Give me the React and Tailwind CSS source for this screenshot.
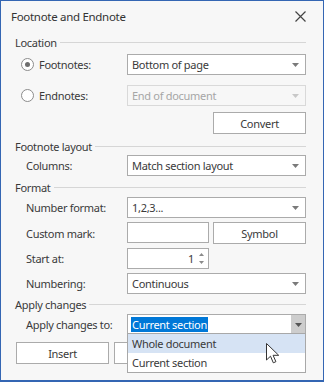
import React from "react";

function Arrow({ disabled, dark }) {
  return (
    <svg width="7" height="4" viewBox="0 0 7 4" className="shrink-0">
      <path d="M0 0h7L3.5 4z" fill={disabled ? "#c8c8c8" : dark ? "#555" : "#7a7a7a"} />
    </svg>
  );
}

function Combo({ value, disabled }) {
  return (
    <div
      className={
        "w-[179px] h-[21px] flex items-center justify-between pl-[4px] pr-[6px] border " +
        (disabled ? "border-[#d9d9d9] bg-[#f7f7f7] text-[#a6a6a6]" : "border-[#ababab] bg-white")
      }
    >
      <span className="whitespace-nowrap">{value}</span>
      <Arrow disabled={disabled} />
    </div>
  );
}

function Button({ children, className = "" }) {
  return (
    <div
      className={
        "h-[22px] flex items-center justify-center border border-[#ababab] bg-white " + className
      }
    >
      {children}
    </div>
  );
}

function Header({ children }) {
  return (
    <div className="h-[16px] flex items-center gap-[3px]">
      <span className="whitespace-nowrap">{children}</span>
      <div className="flex-1 h-px bg-[#d6d6d6] mt-[1px]" />
    </div>
  );
}

function Row({ label, children, className = "" }) {
  return (
    <div className={"flex items-center justify-between pl-[11px] " + className}>
      <span className="whitespace-nowrap">{label}</span>
      {children}
    </div>
  );
}

function Radio({ checked, label }) {
  return (
    <div className="flex items-center gap-[5px] pl-[6px]">
      <span className="w-[13px] h-[13px] rounded-full border border-[#8c8c8c] bg-white flex items-center justify-center">
        {checked && <span className="w-[5px] h-[5px] rounded-full bg-[#6e6e6e]" />}
      </span>
      <span>{label}</span>
    </div>
  );
}

export default function App() {
  return (
    <div className="relative w-[324px] h-[382px] overflow-hidden bg-[#f7f7f7] border border-b-2 border-[#3466b3] text-[11px] leading-[15px] tracking-[-0.3px] text-[#3a3a3a] font-['Noto_Sans',sans-serif]">
      {/* title bar */}
      <div className="h-[30px] flex items-center justify-between pl-[10px] pr-[17px]">
        <span className="text-[#333] text-[11.5px]">Footnote and Endnote</span>
        <svg width="11" height="11" viewBox="0 0 11 11">
          <path d="M0.5 0.5l10 10M10.5 0.5l-10 10" stroke="#444" strokeWidth="1.2" />
        </svg>
      </div>

      <div className="pl-[14px] pr-[17px] flex flex-col">
        <div className="mt-[3px]">
          <Header>Location</Header>
        </div>
        <div className="mt-[4px] flex items-center justify-between">
          <Radio checked label="Footnotes:" />
          <Combo value="Bottom of page" />
        </div>
        <div className="mt-[10px] flex items-center justify-between">
          <Radio label="Endnotes:" />
          <Combo value="End of document" disabled />
        </div>
        <div className="mt-[6px] flex justify-end">
          <Button className="w-[93px]">Convert</Button>
        </div>

        <div className="mt-[4px]">
          <Header>Footnote layout</Header>
        </div>
        <Row label="Columns:" className="mt-[1px]">
          <Combo value="Match section layout" />
        </Row>

        <div className="mt-[3px]">
          <Header>Format</Header>
        </div>
        <div className="mt-[2px] flex flex-col gap-[4px]">
          <Row label="Number format:">
            <Combo value="1,2,3..." />
          </Row>
          <Row label="Custom mark:">
            <div className="w-[179px] flex gap-[4px]">
              <div className="w-[82px] h-[21px] border border-[#ababab] bg-white" />
              <Button className="flex-1 h-[21px]">Symbol</Button>
            </div>
          </Row>
          <Row label="Start at:">
            <div className="w-[179px]">
              <div className="w-[82px] h-[21px] border border-[#ababab] bg-white flex items-center justify-end pr-[4px] gap-[5px]">
                <span>1</span>
                <div className="flex flex-col gap-[5px]">
                  <svg width="5" height="3" viewBox="0 0 5 3">
                    <path d="M0 3h5L2.5 0z" fill="#8a8a8a" />
                  </svg>
                  <svg width="5" height="3" viewBox="0 0 5 3">
                    <path d="M0 0h5L2.5 3z" fill="#8a8a8a" />
                  </svg>
                </div>
              </div>
            </div>
          </Row>
          <Row label="Numbering:">
            <Combo value="Continuous" />
          </Row>
        </div>

        <div className="mt-[2px]">
          <Header>Apply changes</Header>
        </div>
        <Row label="Apply changes to:" className="mt-[2px]">
          <div className="w-[179px] h-[21px] flex items-stretch border border-[#ababab] bg-white">
            <div className="flex-1 flex items-center pl-[3px]">
              <span className="bg-[#0078d7] text-white px-[1px] leading-[15px]">Current section</span>
            </div>
            <div className="w-[14px] bg-[#cdcdcd] flex items-center justify-center">
              <Arrow dark />
            </div>
          </div>
        </Row>

        <div className="mt-[7px] flex gap-[5px] pl-[1px]">
          <Button className="w-[93px]">Insert</Button>
          <Button className="w-[93px]" />
        </div>
      </div>

      {/* open dropdown list */}
      <div className="absolute left-[126px] top-[332px] w-[179px] border border-[#a8a8a8] bg-white flex flex-col">
        <div className="h-[19px] flex items-center pl-[4px] bg-[#d6e3f4]">Whole document</div>
        <div className="h-[19px] flex items-center pl-[4px]">Current section</div>
      </div>

      {/* mouse cursor */}
      <svg className="absolute left-[265px] top-[342px]" width="14" height="22" viewBox="0 0 14 22">
        <path
          d="M0.5 0.5v16.5l4-3.8 2.8 6.6 2.6-1.1-2.8-6.4h5.6z"
          fill="#fff"
          stroke="#333"
          strokeWidth="1"
          strokeLinejoin="round"
        />
      </svg>
    </div>
  );
}
